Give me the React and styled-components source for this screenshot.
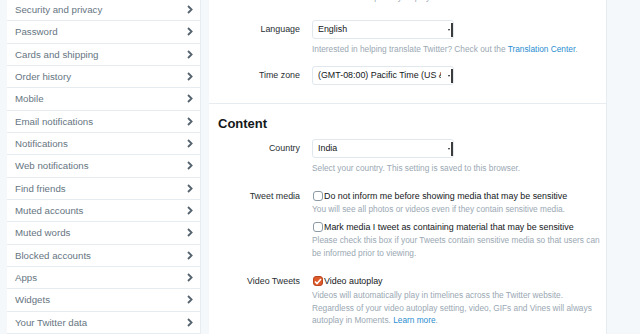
import React from 'react';
import styled, { createGlobalStyle } from 'styled-components';

const GlobalStyle = createGlobalStyle`
  html, body {
    margin: 0;
    padding: 0;
    background: #f5f8fa;
    overflow: hidden;
  }
  body {
    font-family: "Liberation Sans", Arial, sans-serif;
  }
`;

const menuItems = [
  'Security and privacy',
  'Password',
  'Cards and shipping',
  'Order history',
  'Mobile',
  'Email notifications',
  'Notifications',
  'Web notifications',
  'Find friends',
  'Muted accounts',
  'Muted words',
  'Blocked accounts',
  'Apps',
  'Widgets',
  'Your Twitter data',
];

const Page = styled.div`
  display: flex;
  align-items: flex-start;
  gap: 8px;
  padding-left: 7px;
  width: 640px;
  height: 334px;
  box-sizing: border-box;
`;

const Sidebar = styled.ul`
  list-style: none;
  margin: -1px 0 0;
  padding: 0;
  width: 194px;
  background: #fff;
  border-right: 1px solid #e6ecf0;
  box-sizing: border-box;
`;

const MenuRow = styled.li`
  display: flex;
  align-items: center;
  justify-content: space-between;
  height: 22.33px;
  box-sizing: border-box;
  padding: 0 7px 0 8px;
  border-bottom: 1px solid #e6ecf0;
  font-size: 9.7px;
  color: #66757f;
`;

const Chevron = () => (
  <svg width="6" height="9" viewBox="0 0 6 9">
    <path d="M1 1 L4.6 4.5 L1 8" fill="none" stroke="#55636e" strokeWidth="1.8" />
  </svg>
);

const Main = styled.div`
  margin-top: -19px;
  width: 398px;
  background: #fff;
  border-right: 1px solid #e6ecf0;
  box-sizing: border-box;
`;

const Section = styled.section`
  padding: ${p => p.$pad};
  border-bottom: ${p => (p.$divider ? '1px solid #e6ecf0' : 'none')};
`;

const Heading = styled.h2`
  margin: 0 0 0 9px;
  font-size: 13px;
  line-height: 16px;
  font-weight: bold;
  color: #14171a;
`;

const Row = styled.div`
  display: grid;
  grid-template-columns: 91px 1fr;
  column-gap: 12px;
  margin-top: ${p => p.$top || 0}px;
`;

const Label = styled.div`
  text-align: right;
  font-size: 8.9px;
  color: #292f33;
  line-height: ${p => p.$lh || 12}px;
`;

const Control = styled.div`
  display: flex;
  flex-direction: column;
  min-width: 0;
`;

const Select = styled.div`
  position: relative;
  width: 142px;
  height: 19px;
  box-sizing: border-box;
  border: 1px solid #e1e8ed;
  border-radius: 3px;
  background: #fff;
  padding: 0 12px 0 5px;
  font-size: 8.9px;
  line-height: 17px;
  color: #14171a;

  &::before {
    content: '';
    position: absolute;
    right: 0;
    top: 2px;
    bottom: 1px;
    width: 2px;
    background: #3c3c3c;
  }

  &::after {
    content: '';
    position: absolute;
    right: 3px;
    top: 8px;
    border-left: 1.5px solid transparent;
    border-right: 1.5px solid transparent;
    border-top: 2px solid #222;
  }
`;

const SelectText = styled.span`
  display: block;
  white-space: nowrap;
  overflow: hidden;
`;

const Help = styled.p`
  margin: ${p => p.$top || 0}px 0 0;
  max-width: 290px;
  font-size: 8.3px;
  line-height: ${p => p.$lh || 12}px;
  color: #9aa8b3;
`;

const Link = styled.a`
  color: #2a8dcf;
  text-decoration: none;
`;

const CheckLine = styled.label`
  display: flex;
  align-items: center;
  height: 12px;
  margin-top: ${p => p.$top || 0}px;
  font-size: 8.9px;
  color: #14171a;
  white-space: nowrap;
`;

const Box = styled.span`
  display: inline-flex;
  align-items: center;
  justify-content: center;
  width: 10px;
  height: 10px;
  margin: 0 1px 0 1px;
  box-sizing: border-box;
  border-radius: 3px;
  border: 1px solid ${p => (p.$checked ? '#b9471f' : '#8c9aa5')};
  background: ${p => (p.$checked ? '#df5a2b' : '#fff')};
`;

const Check = ({ checked }) => (
  <Box $checked={checked}>
    {checked && (
      <svg width="8" height="7" viewBox="0 0 8 7">
        <path d="M1 3.5 L3 5.5 L7 1" fill="none" stroke="#fff" strokeWidth="1.6" />
      </svg>
    )}
  </Box>
);

export default function App() {
  return (
    <>
      <GlobalStyle />
      <Page>
        <Sidebar>
          {menuItems.map(item => (
            <MenuRow key={item}>
              <span>{item}</span>
              <Chevron />
            </MenuRow>
          ))}
        </Sidebar>

        <Main>
          <Section $pad="10px 0 18px" $divider>
            <Row>
              <div />
              <Help>Email will not be publicly displayed. <Link>Learn more</Link>.</Help>
            </Row>
            <Row $top={17}>
              <Label $lh={19}>Language</Label>
              <Control>
                <Select><SelectText>English</SelectText></Select>
                <Help $top={4}>
                  Interested in helping translate Twitter? Check out the <Link>Translation Center</Link>.
                </Help>
              </Control>
            </Row>
            <Row $top={11}>
              <Label $lh={19}>Time zone</Label>
              <Control>
                <Select><SelectText>(GMT-08:00) Pacific Time (US &amp; Canada)</SelectText></Select>
              </Control>
            </Row>
          </Section>

          <Section $pad="12px 0 30px">
            <Heading>Content</Heading>
            <Row $top={7}>
              <Label $lh={19}>Country</Label>
              <Control>
                <Select><SelectText>India</SelectText></Select>
                <Help $top={4}>Select your country. This setting is saved to this browser.</Help>
              </Control>
            </Row>
            <Row $top={16}>
              <Label>Tweet media</Label>
              <Control>
                <CheckLine>
                  <Check />
                  Do not inform me before showing media that may be sensitive
                </CheckLine>
                <Help $top={1}>You will see all photos or videos even if they contain sensitive media.</Help>
                <CheckLine $top={6}>
                  <Check />
                  Mark media I tweet as containing material that may be sensitive
                </CheckLine>
                <Help $top={1} $lh={12.5}>
                  Please check this box if your Tweets contain sensitive media so that users can be informed prior to viewing.
                </Help>
              </Control>
            </Row>
            <Row $top={16}>
              <Label>Video Tweets</Label>
              <Control>
                <CheckLine>
                  <Check checked />
                  Video autoplay
                </CheckLine>
                <Help $top={2} $lh={12.5}>
                  Videos will automatically play in timelines across the Twitter website. Regardless of your video
                  autoplay setting, video, GIFs and Vines will always autoplay in Moments. <Link>Learn more</Link>.
                </Help>
              </Control>
            </Row>
          </Section>
        </Main>
      </Page>
    </>
  );
}
